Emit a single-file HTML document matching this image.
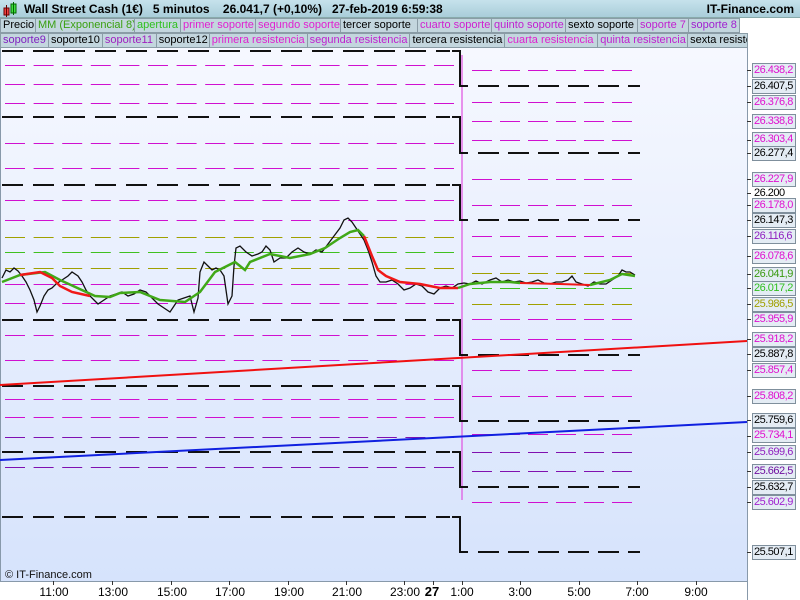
<!DOCTYPE html>
<html><head><meta charset="utf-8"><style>
*{margin:0;padding:0;box-sizing:border-box}
body{width:800px;height:600px;overflow:hidden;background:#fff;font-family:"Liberation Sans",sans-serif;position:relative}
#hdr{position:absolute;left:0;top:0;width:800px;height:18px;background:linear-gradient(#c6e2ec,#a9cdd9);border-bottom:1px solid #8aa;font-weight:bold;font-size:12px;line-height:18px;color:#000}
.row{position:absolute;left:0;height:15px;display:flex;font-size:11px;line-height:13px;white-space:nowrap;overflow:hidden}
.row div{background:#c3d6de;border:1px solid #8a9ca6;border-left:none;padding-left:2px;height:15px;overflow:hidden}
.lbl{position:absolute;left:752px;width:44px;height:15px;border:1px solid #7f8f9c;background:#e4ecf4;font-size:11px;letter-spacing:-0.5px;line-height:13px;text-align:left;padding-left:1px;color:#000;white-space:nowrap;overflow:hidden}
.t{position:absolute;top:585px;font-size:12px;transform:translateX(-50%)}
</style></head><body>
<div id="hdr">
<svg style="position:absolute;left:3px;top:2px" width="16" height="15"><rect x="1" y="6" width="5" height="7" fill="#f04040" stroke="#600" stroke-width="1"/><line x1="3.5" y1="3" x2="3.5" y2="15" stroke="#600"/><rect x="8" y="2" width="5" height="9" fill="#40e040" stroke="#060"/><line x1="10.5" y1="0" x2="10.5" y2="13" stroke="#060"/></svg>
<span style="position:absolute;left:24px">Wall Street Cash (1€)&nbsp;&nbsp;&nbsp;5 minutos&nbsp;&nbsp;&nbsp;&nbsp;26.041,7 (+0,10%)&nbsp;&nbsp;&nbsp;27-feb-2019 6:59:38</span>
<span style="position:absolute;right:6px">IT-Finance.com</span>
</div>
<div class="row" style="top:18px;width:741px">
<div style="width:36px;border-left:1px solid #8a9ca6">Precio</div><div style="width:99px;color:#3aa010">MM (Exponencial 8)</div><div style="width:46px;color:#30c020">apertura</div><div style="width:75px;color:#e020d0">primer soporte</div><div style="width:85px;color:#e020d0">segundo soporte</div><div style="width:77px">tercer soporte</div><div style="width:74px;color:#d020d0">cuarto soporte</div><div style="width:74px;color:#c020d0">quinto soporte</div><div style="width:72px">sexto soporte</div><div style="width:51px;color:#c020d0">soporte 7</div><div style="width:51px;color:#a020d0">soporte 8</div>
</div>
<div class="row" style="top:33px;width:748px">
<div style="width:49px;color:#8020c0;border-left:1px solid #8a9ca6">soporte9</div><div style="width:54px">soporte10</div><div style="width:54px;color:#a020c0">soporte11</div><div style="width:53px">soporte12</div><div style="width:98px;color:#e020d0">primera resistencia</div><div style="width:103px;color:#c020d0">segunda resistencia</div><div style="width:95px">tercera resistencia</div><div style="width:93px;color:#e020d0">cuarta resistencia</div><div style="width:90px;color:#c020d0">quinta resistencia</div><div style="width:60px">sexta resistencia</div>
</div>
<svg style="position:absolute;left:0;top:48px" width="800" height="552">
<defs><linearGradient id="bg" x1="0" y1="0" x2="0" y2="1"><stop offset="0" stop-color="#f6f8ff"/><stop offset="1" stop-color="#d6e3fc"/></linearGradient></defs>
<rect x="0" y="0" width="747" height="533" fill="url(#bg)"/>
<line x1="0.5" y1="0" x2="0.5" y2="533" stroke="#8899aa"/>
<line x1="747.5" y1="0" x2="747.5" y2="552" stroke="#8899aa"/>
<line x1="0" y1="533.5" x2="747" y2="533.5" stroke="#8899aa"/>
<g transform="translate(0,-48)">
<g stroke-width="1" stroke-dasharray="20 8.6" fill="none">
<path d="M5 65.5H458M5 84.5H458M5 103.5H458M5 143.5H458M5 168.5H458M5 200.5H458M5 220.5H458M5 284.5H458M5 303.5H458M5 335.5H458M5 360.5H458M5 399.5H458M5 417.5H458" stroke="#d010d0"/>
<path d="M5 437.5H458M5 467.5H458" stroke="#8010b0"/>
<path d="M5 237.5H458M5 268.5H458" stroke="#a0a000"/>
<path d="M5 252.5H458" stroke="#40c020"/>
</g>
<g stroke-width="1" stroke-dasharray="20 8" fill="none">
<path d="M472 70.5H635M472 102.5H635M472 121.5H635M472 140.5H635M472 179.5H635M472 205.5H635M472 236.5H635M472 256.5H635M472 319.5H635M472 339.5H635M472 370.5H635M472 396.5H635M472 434.5H635M472 502.5H635" stroke="#d010d0"/>
<path d="M472 452.5H635M472 471.5H635" stroke="#8010b0"/>
<path d="M472 273.5H635M472 304.5H635" stroke="#a0a000"/>
<path d="M472 288.5H635" stroke="#40c020"/>
</g>
<line x1="462" y1="55" x2="462" y2="500" stroke="#e050e0" stroke-width="1.5" opacity="0.8"/>
<g stroke="#111" stroke-width="2" fill="none" stroke-dasharray="21 10">
<path d="M2 51H450M2 117H450M2 185H450M2 320H450M2 386H450M2 452H450M2 517H450"/>
<path d="M478 86H640M478 153H640M478 220H640M478 355H640M478 421H640M478 487H640M478 552H640" stroke-dasharray="21 9"/>
</g>
<g stroke="#111" stroke-width="2" fill="none">
<path d="M452 51H460V86H468M452 117H460V153H468M452 185H460V220H468M452 320H460V355H468M452 386H460V421H468M452 452H460V487H468M452 517H460V552H468"/>
</g>
<line x1="0" y1="385" x2="747" y2="341" stroke="#f01010" stroke-width="2"/>
<line x1="0" y1="460" x2="747" y2="422" stroke="#1020e0" stroke-width="2"/>
<polyline fill="none" stroke="#111" stroke-width="1.3" points="2,278 6,270 10,272 14,268 18,271 22,276 26,282 30,290 34,300 37,312 40,306 44,296 48,290 52,288 56,284 62,280 68,276 72,272 78,276 82,282 86,290 90,296 94,300 98,304 104,300 110,296 116,294 122,292 128,296 134,294 140,290 146,292 152,298 158,304 164,308 170,312 174,306 178,300 184,298 190,296 194,312 198,298 200,272 204,262 208,266 212,270 216,268 220,270 224,276 228,304 232,296 234,266 236,248 240,246 246,252 252,256 258,254 262,252 266,246 270,250 274,262 280,258 286,258 292,252 298,248 304,252 310,254 316,250 322,252 328,244 334,236 340,228 344,220 348,218 352,222 356,228 360,234 364,240 368,250 372,262 376,276 380,282 386,282 392,280 398,284 404,290 410,288 416,284 422,286 428,292 434,294 440,288 446,286 452,288 458,284 464,283 470,284 476,281 482,284 490,280 496,278 502,282 508,280 514,282 520,281 526,283 532,282 538,280 544,283 550,284 556,282 562,282 568,280 572,276 576,282 582,284 588,286 594,282 600,284 606,284 612,280 618,276 622,270 626,272 630,272 635,275"/>
<polyline fill="none" stroke="#40a818" stroke-width="2.5" points="2,282 20,275 45,272 60,280 95,296 110,297 120,293 140,292 160,300 185,302 200,292 215,272 235,262 245,270 250,262 270,254 290,258 310,254 325,248 340,238 350,232 358,230 364,236"/>
<polyline fill="none" stroke="#f01818" stroke-width="2.5" points="364,236 372,256 378,270 386,276 400,282 420,284 440,288 458,288"/>
<polyline fill="none" stroke="#40a818" stroke-width="2.5" points="458,288 470,284 490,282 510,282 520,283"/>
<polyline fill="none" stroke="#f01818" stroke-width="2" points="520,283 560,284 590,285"/>
<polyline fill="none" stroke="#40a818" stroke-width="2.5" points="590,285 610,280 622,274 635,276"/>
<polyline fill="none" stroke="#f01818" stroke-width="2.5" points="20,275 40,272 52,278 60,286 72,292 90,296"/>
</g>
<g stroke="#333">
<path d="M747 22.5h4M747 38.5h4M747 54.5h4M747 73.5h4M747 92.5h4M747 105.5h4M747 131.5h4M747 145.5h4M747 157.5h4M747 172.5h4M747 188.5h4M747 208.5h4M747 226.5h4M747 240.5h4M747 256.5h4M747 271.5h4M747 291.5h4M747 306.5h4M747 322.5h4M747 348.5h4M747 372.5h4M747 388.5h4M747 404.5h4M747 423.5h4M747 439.5h4M747 454.5h4M747 504.5h4"/>
<path d="M53.5 533v4M112.5 533v4M171.5 533v4M229.5 533v4M288.5 533v4M346.5 533v4M404.5 533v4M433.5 533v4M462.5 533v4M520.5 533v4M579.5 533v4M637.5 533v4M696.5 533v4"/>
</g>
<text x="5" y="530" font-family="Liberation Sans" font-size="11" fill="#111">© IT-Finance.com</text>
</svg>
<div class="lbl" style="top:63px;color:#e010d0">26.438,2</div>
<div class="lbl" style="top:79px">26.407,5</div>
<div class="lbl" style="top:95px;color:#e010d0">26.376,8</div>
<div class="lbl" style="top:114px;color:#e010d0">26.338,8</div>
<div class="lbl" style="top:132px;color:#e010d0">26.303,4</div>
<div class="lbl" style="top:146px">26.277,4</div>
<div class="lbl" style="top:172px;color:#e010d0">26.227,9</div>
<div class="lbl" style="top:186px;border-color:transparent;background:none">26.200</div>
<div class="lbl" style="top:198px;color:#e010d0">26.178,0</div>
<div class="lbl" style="top:213px">26.147,3</div>
<div class="lbl" style="top:229px;color:#9020c0">26.116,6</div>
<div class="lbl" style="top:249px;color:#e010d0">26.078,6</div>
<div class="lbl" style="top:267px;color:#3a9a10">26.041,9</div>
<div class="lbl" style="top:281px;color:#30c020">26.017,2</div>
<div class="lbl" style="top:297px;color:#a0a000">25.986,5</div>
<div class="lbl" style="top:312px;color:#e010d0">25.955,9</div>
<div class="lbl" style="top:332px;color:#e010d0">25.918,2</div>
<div class="lbl" style="top:347px">25.887,8</div>
<div class="lbl" style="top:363px;color:#e010d0">25.857,4</div>
<div class="lbl" style="top:389px;color:#e010d0">25.808,2</div>
<div class="lbl" style="top:413px">25.759,6</div>
<div class="lbl" style="top:428px;color:#e010d0">25.734,1</div>
<div class="lbl" style="top:445px;color:#9020c0">25.699,6</div>
<div class="lbl" style="top:464px;color:#7010a0">25.662,5</div>
<div class="lbl" style="top:480px">25.632,7</div>
<div class="lbl" style="top:495px;color:#a020d0">25.602,9</div>
<div class="lbl" style="top:545px">25.507,1</div>
<div class="t" style="left:54px">11:00</div>
<div class="t" style="left:113px">13:00</div>
<div class="t" style="left:172px">15:00</div>
<div class="t" style="left:230px">17:00</div>
<div class="t" style="left:289px">19:00</div>
<div class="t" style="left:347px">21:00</div>
<div class="t" style="left:405px">23:00</div>
<div class="t" style="left:432px;font-weight:bold;font-size:13px;top:584px">27</div>
<div class="t" style="left:462px">1:00</div>
<div class="t" style="left:520px">3:00</div>
<div class="t" style="left:579px">5:00</div>
<div class="t" style="left:637px">7:00</div>
<div class="t" style="left:696px">9:00</div>
</body></html>
